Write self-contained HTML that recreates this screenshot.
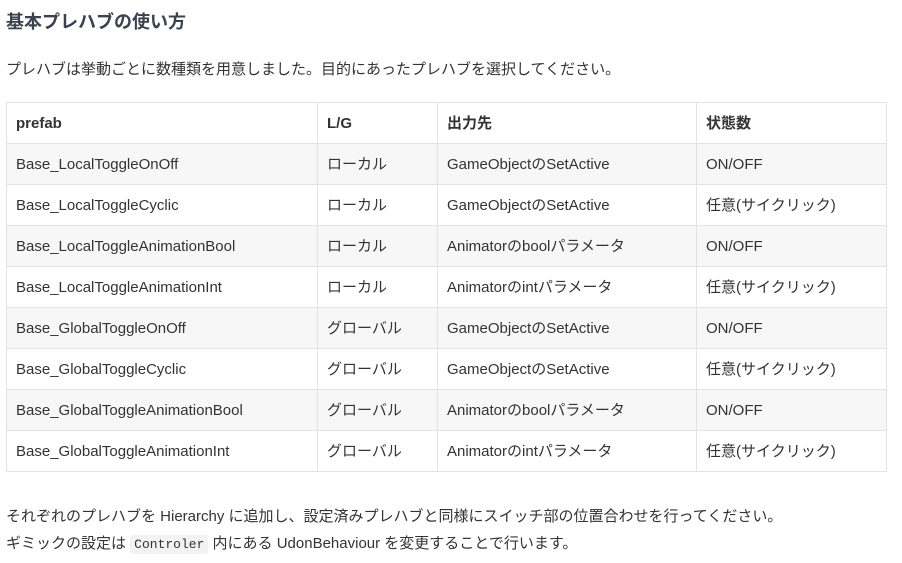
<!DOCTYPE html>
<html><head><meta charset="utf-8"><style>
body{margin:0;background:#fff;font-family:"Liberation Sans","Noto Sans CJK JP",sans-serif;color:#333;font-size:15px;}
h2{position:absolute;left:6px;top:9px;margin:0;font-size:18px;font-weight:bold;color:#3c4150;line-height:26px;}
p{position:absolute;left:6px;margin:0;line-height:27px;color:#333;}
table{position:absolute;left:6px;top:102px;border-collapse:collapse;width:881px;}
td,th{border:1px solid #e3e3e3;height:39px;padding:1px 0 0 9px;text-align:left;font-size:15px;line-height:20px;box-sizing:content-box;}
th{font-weight:bold;}
tbody tr:nth-child(odd){background:#f7f7f7;}
code{font-family:"Liberation Mono",monospace;font-size:13px;background:#f2f2f2;border-radius:3px;padding:2px 4px;}
</style></head><body>
<h2>基本プレハブの使い方</h2>
<p style="top:56px">プレハブは挙動ごとに数種類を用意しました。目的にあったプレハブを選択してください。</p>
<table>
<colgroup><col style="width:311px"><col style="width:120px"><col style="width:259px"><col></colgroup>
<thead><tr><th>prefab</th><th>L/G</th><th>出力先</th><th>状態数</th></tr></thead>
<tbody>
<tr><td>Base_LocalToggleOnOff</td><td>ローカル</td><td>GameObjectのSetActive</td><td>ON/OFF</td></tr>
<tr><td>Base_LocalToggleCyclic</td><td>ローカル</td><td>GameObjectのSetActive</td><td>任意(サイクリック)</td></tr>
<tr><td>Base_LocalToggleAnimationBool</td><td>ローカル</td><td>Animatorのboolパラメータ</td><td>ON/OFF</td></tr>
<tr><td>Base_LocalToggleAnimationInt</td><td>ローカル</td><td>Animatorのintパラメータ</td><td>任意(サイクリック)</td></tr>
<tr><td>Base_GlobalToggleOnOff</td><td>グローバル</td><td>GameObjectのSetActive</td><td>ON/OFF</td></tr>
<tr><td>Base_GlobalToggleCyclic</td><td>グローバル</td><td>GameObjectのSetActive</td><td>任意(サイクリック)</td></tr>
<tr><td>Base_GlobalToggleAnimationBool</td><td>グローバル</td><td>Animatorのboolパラメータ</td><td>ON/OFF</td></tr>
<tr><td>Base_GlobalToggleAnimationInt</td><td>グローバル</td><td>Animatorのintパラメータ</td><td>任意(サイクリック)</td></tr>
</tbody></table>
<p style="top:503px">それぞれのプレハブを Hierarchy に追加し、設定済みプレハブと同様にスイッチ部の位置合わせを行ってください。</p>
<p style="top:530px">ギミックの設定は <code>Controler</code> 内にある UdonBehaviour を変更することで行います。</p>
</body></html>
